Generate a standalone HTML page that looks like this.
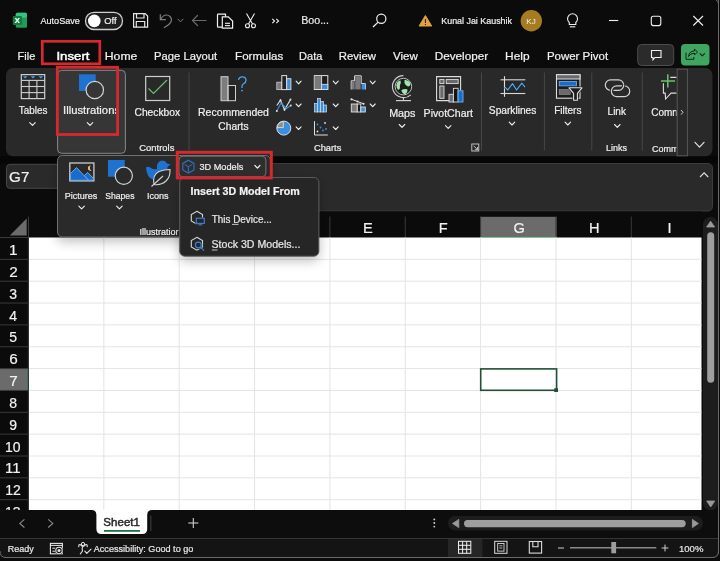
<!DOCTYPE html>
<html><head><meta charset="utf-8"><style>
html,body{margin:0;padding:0;background:#0b0b0b;width:720px;height:561px;overflow:hidden}
svg{display:block;will-change:transform;font-family:"Liberation Sans",sans-serif}
</style></head><body>
<svg width="720" height="561" viewBox="0 0 720 561">
<rect x="0" y="0" width="720" height="561" rx="0" fill="#0b0b0b" />
<path d="M718.5,0 L718.5,551 Q718.5,557.5 712,557.5 L6,557.5 Q0,557.5 0,551" fill="none" stroke="#6a6a6a" stroke-width="1" />
<rect x="15.8" y="12.8" width="11.2" height="15" rx="1.5" fill="#1f9d55" />
<rect x="15.8" y="12.8" width="11.2" height="5" rx="1.5" fill="#33c481" />
<rect x="12.8" y="16" width="9.1" height="9.1" rx="1" fill="#107c41" />
<text x="14.73" y="23.18" font-size="7.50" font-weight="bold" fill="#ffffff"  stroke="#ffffff" stroke-width="0.2">X</text>
<text x="40.48" y="23.80" font-size="9.60" fill="#f0f0f0" textLength="39.42" lengthAdjust="spacingAndGlyphs"  stroke="#f0f0f0" stroke-width="0.2">AutoSave</text>
<rect x="85.5" y="12.3" width="37" height="17.2" rx="8.6" fill="#1e1e1e" stroke="#cfcfcf" stroke-width="1.3" />
<circle cx="94.3" cy="20.9" r="6.3" fill="#ffffff"/>
<text x="104.25" y="24.23" font-size="9.40" fill="#f0f0f0"  stroke="#f0f0f0" stroke-width="0.2">Off</text>
<path d="M133.6,13.6 H145.2 L147.6,16 V27.2 H133.6 Z" fill="none" stroke="#e6e6e6" stroke-width="1.2" />
<path d="M136.5,13.6 V18 H144 V13.6" fill="none" stroke="#e6e6e6" stroke-width="1.2" />
<path d="M136.3,27.2 V21.5 H144.7 V27.2" fill="none" stroke="#e6e6e6" stroke-width="1.2" />
<path d="M160.3,14.5 V19.6 H165.5 M160.6,19.4 Q163,15 166.5,15 A5,5 0 0 1 171.5,20 Q171.5,23.5 164.3,27.5" fill="none" stroke="#7d7d7d" stroke-width="1.2" stroke-linecap="round"/>
<path d="M178.0,19.2 L180.5,21.8 L183.0,19.2" fill="none" stroke="#7d7d7d" stroke-width="1" stroke-linecap="round" stroke-linejoin="round"/>
<path d="M192.5,20.5 H206 M197.5,15.5 L192.5,20.5 L197.5,25.5" fill="none" stroke="#6a6a6a" stroke-width="1.2" stroke-linecap="round" stroke-linejoin="round"/>
<path d="M225.5,16.5 V14.2 H218.2 Q217.5,14.2 217.5,15 V26.5 Q217.5,27.2 218.2,27.2 H222" fill="none" stroke="#f0f0f0" stroke-width="1.2" />
<path d="M222.3,16.8 H228.3 L232.6,21 V28.2 H222.3 Z" fill="none" stroke="#f0f0f0" stroke-width="1.2" />
<line x1="225" y1="23.3" x2="230" y2="23.3" stroke="#f0f0f0" stroke-width="1.1" />
<line x1="225" y1="25.6" x2="230" y2="25.6" stroke="#f0f0f0" stroke-width="1.1" />
<path d="M246.5,13.5 L252.5,24 M254.5,13.5 L248.5,24" fill="none" stroke="#f0f0f0" stroke-width="1.1" />
<circle cx="247.5" cy="25.8" r="2" fill="none" stroke="#f0f0f0" stroke-width="1.1"/>
<circle cx="253.5" cy="25.8" r="2" fill="none" stroke="#f0f0f0" stroke-width="1.1"/>
<path d="M272.3,18.8 L274.6,21 L272.3,23.2 M276.3,18.8 L278.6,21 L276.3,23.2" fill="none" stroke="#f0f0f0" stroke-width="1.1" />
<text x="301.18" y="24.44" font-size="10.00" fill="#e8e8e8" textLength="27.85" lengthAdjust="spacingAndGlyphs"  stroke="#e8e8e8" stroke-width="0.2">Boo...</text>
<circle cx="381.3" cy="18.8" r="4.6" fill="none" stroke="#f0f0f0" stroke-width="1.2"/>
<line x1="377.9" y1="22.4" x2="373" y2="27" stroke="#f0f0f0" stroke-width="1.3" />
<path d="M425.4,15.5 L431.7,26 H419.1 Z" fill="#e2a23e" stroke="#e2a23e" stroke-width="1" stroke-linejoin="round"/>
<rect x="424.9" y="19" width="1.1" height="4" rx="0" fill="#3a2a10" />
<rect x="424.9" y="24" width="1.1" height="1.1" rx="0" fill="#3a2a10" />
<text x="441.26" y="24.10" font-size="9.00" fill="#f0f0f0" textLength="70.72" lengthAdjust="spacingAndGlyphs"  stroke="#f0f0f0" stroke-width="0.2">Kunal Jai Kaushik</text>
<circle cx="531.3" cy="20.7" r="10.7" fill="#a67c20"/>
<text x="526.34" y="23.75" font-size="8.00" fill="#f4f4f4" stroke-width="0">KJ</text>
<path d="M569.3,22.5 A5,5 0 1 1 575.8,22.5 V24.5 H569.3 Z" fill="none" stroke="#f0f0f0" stroke-width="1.1" />
<line x1="569.8" y1="26.8" x2="575.3" y2="26.8" stroke="#f0f0f0" stroke-width="1.1" />
<line x1="609" y1="20.5" x2="618.3" y2="20.5" stroke="#f0f0f0" stroke-width="1.1" />
<rect x="651.3" y="16.3" width="9.5" height="9.3" rx="2" fill="none" stroke="#f0f0f0" stroke-width="1.1" />
<path d="M693.3,16 L703,25.5 M703,16 L693.3,25.5" fill="none" stroke="#f0f0f0" stroke-width="1.1" />
<text x="17.60" y="59.78" font-size="11.00" fill="#f2f2f2"  stroke="#f2f2f2" stroke-width="0.2">File</text>
<text x="56.46" y="59.89" font-size="11.30" fill="#ffffff" textLength="33.01" lengthAdjust="spacingAndGlyphs" stroke="#ffffff" stroke-width="0.45">Insert</text>
<text x="104.80" y="59.78" font-size="11.00" fill="#f2f2f2" textLength="32.54" lengthAdjust="spacingAndGlyphs"  stroke="#f2f2f2" stroke-width="0.2">Home</text>
<text x="154.10" y="59.78" font-size="11.00" fill="#f2f2f2" textLength="63.00" lengthAdjust="spacingAndGlyphs"  stroke="#f2f2f2" stroke-width="0.2">Page Layout</text>
<text x="235.10" y="59.78" font-size="11.00" fill="#f2f2f2" textLength="48.06" lengthAdjust="spacingAndGlyphs"  stroke="#f2f2f2" stroke-width="0.2">Formulas</text>
<text x="299.10" y="59.78" font-size="11.00" fill="#f2f2f2"  stroke="#f2f2f2" stroke-width="0.2">Data</text>
<text x="338.80" y="59.78" font-size="11.00" fill="#f2f2f2" textLength="37.20" lengthAdjust="spacingAndGlyphs"  stroke="#f2f2f2" stroke-width="0.2">Review</text>
<text x="392.95" y="59.78" font-size="11.00" fill="#f2f2f2" textLength="24.82" lengthAdjust="spacingAndGlyphs"  stroke="#f2f2f2" stroke-width="0.2">View</text>
<text x="434.70" y="59.78" font-size="11.00" fill="#f2f2f2" textLength="53.56" lengthAdjust="spacingAndGlyphs"  stroke="#f2f2f2" stroke-width="0.2">Developer</text>
<text x="505.10" y="59.78" font-size="11.00" fill="#f2f2f2" textLength="24.48" lengthAdjust="spacingAndGlyphs"  stroke="#f2f2f2" stroke-width="0.2">Help</text>
<text x="546.90" y="59.78" font-size="11.00" fill="#f2f2f2" textLength="61.23" lengthAdjust="spacingAndGlyphs"  stroke="#f2f2f2" stroke-width="0.2">Power Pivot</text>
<rect x="42.3" y="41.3" width="57.5" height="22.5" rx="0" fill="none" stroke="#d42a2f" stroke-width="2.7" />
<rect x="637.7" y="44.5" width="36" height="21" rx="4" fill="#2b2b2b" stroke="#4d4d4d" stroke-width="1" />
<path d="M651.5,50.5 H661 V57.5 H655 L653,59.8 V57.5 H651.5 Z" fill="none" stroke="#f0f0f0" stroke-width="1.1" />
<rect x="681" y="44" width="28.5" height="21.5" rx="4" fill="#3fa560" />
<path d="M686,52.5 V59.3 H693.8 V57 M688.5,56.5 Q689,51 694.5,51 V49 L697.5,52 L694.5,55 V53.2 Q690.5,53 688.5,56.5 Z" fill="none" stroke="#0f2a18" stroke-width="1" />
<path d="M700.05,53.550000000000004 L702.3,55.85 L704.55,53.550000000000004" fill="none" stroke="#0f2a18" stroke-width="1.1" stroke-linecap="round" stroke-linejoin="round"/>
<rect x="0" y="156" width="718" height="7.5" rx="0" fill="#060606" />
<rect x="6" y="68" width="706.5" height="88.2" rx="7" fill="#292929" />
<line x1="189" y1="72.5" x2="189" y2="150.5" stroke="#474747" stroke-width="1" />
<line x1="481.5" y1="72.5" x2="481.5" y2="150.5" stroke="#474747" stroke-width="1" />
<line x1="544.4" y1="72.5" x2="544.4" y2="150.5" stroke="#474747" stroke-width="1" />
<line x1="591.8" y1="72.5" x2="591.8" y2="150.5" stroke="#474747" stroke-width="1" />
<line x1="642.3" y1="72.5" x2="642.3" y2="150.5" stroke="#474747" stroke-width="1" />
<rect x="21.3" y="74.6" width="23.4" height="24" rx="0" fill="none" stroke="#cfcfcf" stroke-width="1.2" />
<line x1="21.3" y1="80.4" x2="44.7" y2="80.4" stroke="#cfcfcf" stroke-width="1.1" />
<line x1="21.3" y1="86.5" x2="44.7" y2="86.5" stroke="#cfcfcf" stroke-width="1.1" />
<line x1="21.3" y1="92.6" x2="44.7" y2="92.6" stroke="#cfcfcf" stroke-width="1.1" />
<line x1="29.1" y1="80.4" x2="29.1" y2="98.6" stroke="#cfcfcf" stroke-width="1.1" />
<line x1="36.9" y1="80.4" x2="36.9" y2="98.6" stroke="#cfcfcf" stroke-width="1.1" />
<path d="M22.9,76.3 H27.5 L25.2,78.6 Z" fill="#4aa3f0" />
<path d="M30.7,76.3 H35.3 L33,78.6 Z" fill="#4aa3f0" />
<path d="M38.5,76.3 H43.099999999999994 L40.8,78.6 Z" fill="#4aa3f0" />
<text x="18.78" y="113.84" font-size="10.00" fill="#f0f0f0" textLength="28.56" lengthAdjust="spacingAndGlyphs"  stroke="#f0f0f0" stroke-width="0.2">Tables</text>
<path d="M29.75,122.6 L32.5,125.4 L35.25,122.6" fill="none" stroke="#f0f0f0" stroke-width="1.1" stroke-linecap="round" stroke-linejoin="round"/>
<rect x="57.6" y="70.3" width="67.8" height="83" rx="4" fill="#363636" stroke="#8a8a8a" stroke-width="1" />
<rect x="79" y="74.3" width="16.7" height="16.7" rx="0" fill="#1e72d0" />
<circle cx="94.8" cy="90" r="8.7" fill="#363636" stroke="#d4d4d4" stroke-width="1.2"/>
<clipPath id="illc"><rect x="58" y="70" width="58" height="80"/></clipPath>
<text x="63.08" y="114.44" font-size="10.00" fill="#f0f0f0" textLength="56.95" lengthAdjust="spacingAndGlyphs" clip-path="url(#illc)" stroke="#f0f0f0" stroke-width="0.2">Illustrations</text>
<path d="M87.25,122.6 L90,125.4 L92.75,122.6" fill="none" stroke="#f0f0f0" stroke-width="1.1" stroke-linecap="round" stroke-linejoin="round"/>
<rect x="57.3" y="67.3" width="60.3" height="67.2" rx="0" fill="none" stroke="#d42a2f" stroke-width="2.8" />
<rect x="145.7" y="76.5" width="24" height="24" rx="0" fill="none" stroke="#cfcfcf" stroke-width="1.2" />
<path d="M148.5,88.5 L153.5,93.5 L167,80" fill="none" stroke="#6cc070" stroke-width="1.2" />
<text x="134.49" y="115.64" font-size="10.00" fill="#f0f0f0" textLength="45.63" lengthAdjust="spacingAndGlyphs"  stroke="#f0f0f0" stroke-width="0.2">Checkbox</text>
<text x="139.34" y="151.40" font-size="9.00" fill="#f0f0f0" textLength="35.02" lengthAdjust="spacingAndGlyphs"  stroke="#f0f0f0" stroke-width="0.2">Controls</text>
<rect x="221" y="76.7" width="7" height="24" rx="0" fill="#7d7d7d" />
<rect x="228" y="85.5" width="7.5" height="15.2" rx="0" fill="#232323" stroke="#cfcfcf" stroke-width="1" />
<rect x="221" y="76.7" width="7" height="24" rx="0" fill="none" stroke="#cfcfcf" stroke-width="1" />
<path d="M238.6,80 Q238.8,76.8 242.3,76.8 Q246,76.8 246,80.2 Q246,82.6 243.3,84 Q242,84.8 242,86.8 V88" fill="none" stroke="#4aa3f0" stroke-width="1.3" />
<circle cx="242" cy="90.6" r="0.9" fill="#4aa3f0"/>
<text x="198.08" y="116.04" font-size="10.00" fill="#f0f0f0" textLength="70.83" lengthAdjust="spacingAndGlyphs"  stroke="#f0f0f0" stroke-width="0.2">Recommended</text>
<text x="218.39" y="130.44" font-size="10.00" fill="#f0f0f0" textLength="30.19" lengthAdjust="spacingAndGlyphs"  stroke="#f0f0f0" stroke-width="0.2">Charts</text>
<rect x="276.8" y="82.2" width="4.8" height="7.4" rx="0" fill="#7a7a7a" stroke="#cfcfcf" stroke-width="0.8" />
<rect x="281.8" y="75.6" width="4.8" height="14" rx="0" fill="#232323" stroke="#e0e0e0" stroke-width="1" />
<rect x="286.7" y="78.7" width="4.2" height="10.9" rx="0" fill="#3b8fe0" stroke="#e0e0e0" stroke-width="0.9" />
<path d="M296.1,81.2 L298.6,83.8 L301.1,81.2" fill="none" stroke="#f0f0f0" stroke-width="1.1" stroke-linecap="round" stroke-linejoin="round"/>
<path d="M276.8,105.5 L280.5,100.2 L284.5,109.8 L290.5,99.6" fill="none" stroke="#e0e0e0" stroke-width="1.1" />
<path d="M276.8,111 L281,103 L286.5,108.5 L290.8,105.5" fill="none" stroke="#3b8fe0" stroke-width="1.1" />
<circle cx="280.5" cy="100.2" r="1" fill="#e0e0e0"/>
<circle cx="284.5" cy="109.8" r="1" fill="#e0e0e0"/>
<circle cx="290.5" cy="99.6" r="1" fill="#e0e0e0"/>
<circle cx="276.8" cy="111" r="1" fill="#e0e0e0"/>
<circle cx="290.8" cy="105.5" r="1" fill="#e0e0e0"/>
<path d="M296.1,104.0 L298.6,106.6 L301.1,104.0" fill="none" stroke="#f0f0f0" stroke-width="1.1" stroke-linecap="round" stroke-linejoin="round"/>
<circle cx="283.8" cy="128.1" r="7" fill="#3b8fe0" stroke="#e0e0e0" stroke-width="1"/>
<path d="M283.3,127.6 V121.6 A6,6 0 0 0 277.3,127.6 Z" fill="#8c8c8c" stroke="#e0e0e0" stroke-width="0.9" />
<path d="M296.1,126.89999999999999 L298.6,129.5 L301.1,126.89999999999999" fill="none" stroke="#f0f0f0" stroke-width="1.1" stroke-linecap="round" stroke-linejoin="round"/>
<rect x="314.3" y="75.6" width="13.5" height="13.9" rx="0" fill="#1c1c1c" stroke="#e0e0e0" stroke-width="1" />
<rect x="314.8" y="76.1" width="6.8" height="12.9" rx="0" fill="#7a7a7a" />
<line x1="321.6" y1="75.6" x2="321.6" y2="89.5" stroke="#e0e0e0" stroke-width="0.9" />
<rect x="321.6" y="84.3" width="6.2" height="5.2" rx="0" fill="#3b8fe0" stroke="#e0e0e0" stroke-width="0.8" />
<path d="M333.2,81.2 L335.7,83.8 L338.2,81.2" fill="none" stroke="#f0f0f0" stroke-width="1.1" stroke-linecap="round" stroke-linejoin="round"/>
<rect x="314.5" y="103.6" width="3" height="8.400000000000006" rx="0" fill="#3b8fe0" stroke="#e0e0e0" stroke-width="0.7" />
<rect x="317.5" y="98.5" width="3" height="13.5" rx="0" fill="#3b8fe0" stroke="#e0e0e0" stroke-width="0.7" />
<rect x="320.5" y="101.5" width="3" height="10.5" rx="0" fill="#3b8fe0" stroke="#e0e0e0" stroke-width="0.7" />
<rect x="323.5" y="105" width="3" height="7" rx="0" fill="#3b8fe0" stroke="#e0e0e0" stroke-width="0.7" />
<path d="M333.2,104.0 L335.7,106.6 L338.2,104.0" fill="none" stroke="#f0f0f0" stroke-width="1.1" stroke-linecap="round" stroke-linejoin="round"/>
<path d="M314.5,121.2 V135 H327.8" fill="none" stroke="#e0e0e0" stroke-width="1" />
<circle cx="317.5" cy="124.5" r="0.9" fill="#3b8fe0"/>
<circle cx="320.5" cy="127.5" r="0.9" fill="#3b8fe0"/>
<circle cx="323" cy="130.5" r="0.9" fill="#3b8fe0"/>
<circle cx="325" cy="123" r="0.9" fill="#e0e0e0"/>
<circle cx="317.5" cy="131.5" r="0.9" fill="#e0e0e0"/>
<circle cx="326" cy="129" r="0.9" fill="#3b8fe0"/>
<path d="M333.2,126.89999999999999 L335.7,129.5 L338.2,126.89999999999999" fill="none" stroke="#f0f0f0" stroke-width="1.1" stroke-linecap="round" stroke-linejoin="round"/>
<path d="M351.2,89.5 V80.8 H354.6 V75.8 H361.2 V83.5 H365.3 V89.5" fill="none" stroke="#e0e0e0" stroke-width="1" />
<rect x="355.2" y="76.4" width="5.4" height="13" rx="0" fill="#7a7a7a" />
<rect x="351.8" y="81.4" width="2.8" height="8" rx="0" fill="#7a7a7a" />
<rect x="361.6" y="83.8" width="3.4" height="5.7" rx="0" fill="#3b8fe0" />
<path d="M370.2,81.2 L372.7,83.8 L375.2,81.2" fill="none" stroke="#f0f0f0" stroke-width="1.1" stroke-linecap="round" stroke-linejoin="round"/>
<path d="M351.5,99.3 L357.5,101.5 L363.5,103.8" fill="none" stroke="#e0e0e0" stroke-width="1" />
<circle cx="351.5" cy="99.3" r="1.1" fill="#e0e0e0"/>
<circle cx="357.5" cy="101.5" r="1.1" fill="#e0e0e0"/>
<circle cx="363.5" cy="103.8" r="1.1" fill="#e0e0e0"/>
<rect x="351.3" y="104" width="6" height="8" rx="0" fill="#7a7a7a" stroke="#e0e0e0" stroke-width="0.9" />
<rect x="357.3" y="104" width="3.5" height="8" rx="0" fill="#1c1c1c" stroke="#e0e0e0" stroke-width="0.9" />
<rect x="360.8" y="107" width="4.5" height="5" rx="0" fill="#3b8fe0" stroke="#e0e0e0" stroke-width="0.9" />
<path d="M370.2,104.0 L372.7,106.6 L375.2,104.0" fill="none" stroke="#f0f0f0" stroke-width="1.1" stroke-linecap="round" stroke-linejoin="round"/>
<text x="313.94" y="150.60" font-size="9.00" fill="#f0f0f0" textLength="27.41" lengthAdjust="spacingAndGlyphs"  stroke="#f0f0f0" stroke-width="0.2">Charts</text>
<circle cx="403.4" cy="86.6" r="8.3" fill="#17201a" stroke="#cfcfcf" stroke-width="0.9"/>
<path d="M396.5,84 Q398,80.5 400.5,80.5 Q401.5,83 399.8,85.5 Q400.5,89 398.5,90 Q396,88 396.5,84 Z M404.5,80 Q408,79.5 410.5,83 Q410.5,86.5 408,86.5 Q405.5,86 404.5,83 Z M401.5,90 Q405,88.5 407.5,89.5 Q407.5,93.5 404.5,94.3 Q401.5,93 401.5,90 Z" fill="#a8e2ae" />
<path d="M403.4,75.6 A11,11 0 1 0 410.8,94.8" fill="none" stroke="#cfcfcf" stroke-width="1.1" />
<line x1="403.4" y1="97.6" x2="403.4" y2="100.3" stroke="#cfcfcf" stroke-width="1.1" />
<line x1="396" y1="100.6" x2="411" y2="100.6" stroke="#cfcfcf" stroke-width="1.2" />
<text x="389.18" y="116.74" font-size="10.00" fill="#f0f0f0" textLength="26.27" lengthAdjust="spacingAndGlyphs"  stroke="#f0f0f0" stroke-width="0.2">Maps</text>
<path d="M399.25,124.5 L402,127.30000000000001 L404.75,124.5" fill="none" stroke="#f0f0f0" stroke-width="1.1" stroke-linecap="round" stroke-linejoin="round"/>
<path d="M449,100.6 H436.6 V76.6 H460.6 V90.5" fill="none" stroke="#dedede" stroke-width="1.1" />
<rect x="439.8" y="79.4" width="4.2" height="4.2" rx="0" fill="#6a6a6a" stroke="#dedede" stroke-width="0.9" />
<rect x="446.2" y="79.4" width="12" height="4.2" rx="0" fill="#6a6a6a" stroke="#dedede" stroke-width="0.9" />
<rect x="439.8" y="86" width="4.2" height="12.3" rx="0" fill="#6a6a6a" stroke="#dedede" stroke-width="0.9" />
<rect x="449" y="94.3" width="4.4" height="7.7" rx="0" fill="#6a6a6a" stroke="#dedede" stroke-width="0.9" />
<rect x="453.4" y="88.3" width="4.7" height="13.7" rx="0" fill="#151515" stroke="#dedede" stroke-width="0.9" />
<rect x="458.1" y="90.8" width="4.9" height="11.2" rx="0" fill="#1a6ccc" stroke="#74b2ee" stroke-width="0.9" />
<text x="423.58" y="117.04" font-size="10.00" fill="#f0f0f0" textLength="49.45" lengthAdjust="spacingAndGlyphs"  stroke="#f0f0f0" stroke-width="0.2">PivotChart</text>
<path d="M445.45,125.6 L448.2,128.4 L450.95,125.6" fill="none" stroke="#f0f0f0" stroke-width="1.1" stroke-linecap="round" stroke-linejoin="round"/>
<rect x="471.8" y="144" width="7" height="7" rx="0" fill="none" stroke="#cfcfcf" stroke-width="0.9" />
<path d="M473.5,145.7 L477.5,149.7 M477.5,147 V149.7 H474.8" fill="none" stroke="#cfcfcf" stroke-width="0.9" />
<line x1="500.5" y1="79.8" x2="525.3" y2="79.8" stroke="#d8d8d8" stroke-width="1.1" />
<line x1="500.5" y1="93.5" x2="525.3" y2="93.5" stroke="#d8d8d8" stroke-width="1.1" />
<line x1="504.5" y1="76.2" x2="504.5" y2="96.8" stroke="#e0e0e0" stroke-width="1.1" />
<path d="M505,87.2 L507.8,90 L512.5,83.6 L516.6,90 L521.8,83.2 L525,87.2" fill="none" stroke="#0d2a44" stroke-width="2.4" stroke-linejoin="round"/>
<path d="M505,87.2 L507.8,90 L512.5,83.6 L516.6,90 L521.8,83.2 L525,87.2" fill="none" stroke="#62aee8" stroke-width="1.1" stroke-linejoin="round"/>
<text x="488.85" y="113.84" font-size="10.00" fill="#f0f0f0" textLength="47.53" lengthAdjust="spacingAndGlyphs"  stroke="#f0f0f0" stroke-width="0.2">Sparklines</text>
<path d="M509.25,122.19999999999999 L512,125.0 L514.75,122.19999999999999" fill="none" stroke="#f0f0f0" stroke-width="1.1" stroke-linecap="round" stroke-linejoin="round"/>
<rect x="556.5" y="74.7" width="23.5" height="23.5" rx="0" fill="#1c1c1c" stroke="#dedede" stroke-width="1.1" />
<rect x="556.5" y="74.7" width="23.5" height="4.3" rx="0" fill="#6a6a6a" stroke="#dedede" stroke-width="1" />
<rect x="559.2" y="81.4" width="17.3" height="4.5" rx="0" fill="#1a6ccc" stroke="#74b2ee" stroke-width="0.8" />
<rect x="559.2" y="89.6" width="11" height="4.8" rx="0" fill="#6a6a6a" stroke="#9a9a9a" stroke-width="0.6" />
<path d="M569,87.8 H582 L577.4,93.4 V100.2 H573.6 V93.4 Z" fill="#292929" stroke="#292929" stroke-width="2.4" />
<path d="M569,87.8 H582 L577.4,93.4 V100.2 H573.6 V93.4 Z" fill="#1c1c1c" stroke="#dedede" stroke-width="1.1" stroke-linejoin="round"/>
<text x="554.18" y="113.84" font-size="10.00" fill="#f0f0f0"  stroke="#f0f0f0" stroke-width="0.2">Filters</text>
<path d="M565.05,122.19999999999999 L567.8,125.0 L570.55,122.19999999999999" fill="none" stroke="#f0f0f0" stroke-width="1.1" stroke-linecap="round" stroke-linejoin="round"/>
<path d="M610.55,79.8 H618.45 A5.25,5.25 0 0 1 618.45,90.3 H610.55 A5.25,5.25 0 0 1 610.55,79.8 Z" fill="none" stroke="#d4d4d4" stroke-width="1.2" />
<path d="M616.8,96.7 A5.45,5.45 0 0 1 616.8,85.8 H622" fill="none" stroke="#292929" stroke-width="3.2" />
<path d="M616.8,85.8 H624.3 A5.45,5.45 0 0 1 624.3,96.7 H616.8 A5.45,5.45 0 0 1 616.8,85.8 Z" fill="none" stroke="#d4d4d4" stroke-width="1.2" />
<path d="M623.7,84.5 A5.25,5.25 0 0 1 618.45,90.3 H613" fill="none" stroke="#292929" stroke-width="3.2" />
<path d="M623.7,84.5 A5.25,5.25 0 0 1 618.45,90.3 H613.5" fill="none" stroke="#d4d4d4" stroke-width="1.2" />
<text x="607.58" y="115.34" font-size="10.00" fill="#f0f0f0"  stroke="#f0f0f0" stroke-width="0.2">Link</text>
<path d="M614.55,124.5 L617.3,127.30000000000001 L620.05,124.5" fill="none" stroke="#f0f0f0" stroke-width="1.1" stroke-linecap="round" stroke-linejoin="round"/>
<text x="605.96" y="150.60" font-size="9.00" fill="#f0f0f0"  stroke="#f0f0f0" stroke-width="0.2">Links</text>
<clipPath id="comc"><rect x="640" y="68" width="36.5" height="90"/></clipPath>
<g clip-path="url(#comc)">
<path d="M663.4,83.2 V93.1 H665.2 L665.6,99 L671,93.1 H680 V77.4 H670.3" fill="none" stroke="#dcdcdc" stroke-width="1.1" />
<line x1="661" y1="80.9" x2="675" y2="80.9" stroke="#6cc06f" stroke-width="1.5" />
<line x1="667.8" y1="74.3" x2="667.8" y2="87.6" stroke="#6cc06f" stroke-width="1.5" />
<text x="651.19" y="116.34" font-size="10.00" fill="#f0f0f0"  stroke="#f0f0f0" stroke-width="0.2">Comments</text>
<text x="651.94" y="151.60" font-size="9.00" fill="#f0f0f0"  stroke="#f0f0f0" stroke-width="0.2">Comments</text>
</g>
<rect x="677.2" y="69.2" width="10.2" height="86.6" rx="0" fill="#292929" stroke="#585858" stroke-width="1" />
<path d="M681,110 L683,112.3 L681,114.6" fill="none" stroke="#cfcfcf" stroke-width="1" />
<path d="M695.0,142.29999999999998 L699.5,147.1 L704.0,142.29999999999998" fill="none" stroke="#e0e0e0" stroke-width="1.2" stroke-linecap="round" stroke-linejoin="round"/>
<rect x="160.5" y="163.5" width="552" height="47.5" rx="4.5" fill="#2a2a2a" stroke="#3c3c3c" stroke-width="1" />
<rect x="6.5" y="164.3" width="110" height="24" rx="3.5" fill="#2a2a2a" stroke="#484848" stroke-width="1" />
<text x="9.10" y="181.52" font-size="14.00" fill="#f0f0f0" textLength="20.23" lengthAdjust="spacingAndGlyphs"  stroke="#f0f0f0" stroke-width="0.2">G7</text>
<path d="M700,177 L704.1,172.8 L708.2,177" fill="none" stroke="#e0e0e0" stroke-width="1.1" />
<rect x="0" y="211.5" width="702" height="26" rx="0" fill="#0b0b0b" />
<rect x="480" y="216.8" width="76.6" height="20.7" rx="0" fill="#6b6b6b" />
<line x1="480" y1="236.8" x2="556.6" y2="236.8" stroke="#3e8a5e" stroke-width="1.2" />
<line x1="103.85" y1="216.5" x2="103.85" y2="237.5" stroke="#3a3a3a" stroke-width="1" />
<line x1="179.2" y1="216.5" x2="179.2" y2="237.5" stroke="#3a3a3a" stroke-width="1" />
<line x1="254.54999999999998" y1="216.5" x2="254.54999999999998" y2="237.5" stroke="#3a3a3a" stroke-width="1" />
<line x1="329.9" y1="216.5" x2="329.9" y2="237.5" stroke="#3a3a3a" stroke-width="1" />
<line x1="405.25" y1="216.5" x2="405.25" y2="237.5" stroke="#3a3a3a" stroke-width="1" />
<line x1="480.59999999999997" y1="216.5" x2="480.59999999999997" y2="237.5" stroke="#3a3a3a" stroke-width="1" />
<line x1="555.9499999999999" y1="216.5" x2="555.9499999999999" y2="237.5" stroke="#3a3a3a" stroke-width="1" />
<line x1="631.3" y1="216.5" x2="631.3" y2="237.5" stroke="#3a3a3a" stroke-width="1" />
<line x1="28.5" y1="216.5" x2="28.5" y2="237.5" stroke="#3a3a3a" stroke-width="1" />
<text x="62.00" y="232.62" font-size="14.60" fill="#f2f2f2"  stroke="#f2f2f2" stroke-width="0.2">A</text>
<text x="137.10" y="232.62" font-size="14.60" fill="#f2f2f2"  stroke="#f2f2f2" stroke-width="0.2">B</text>
<text x="212.20" y="232.62" font-size="14.60" fill="#f2f2f2"  stroke="#f2f2f2" stroke-width="0.2">C</text>
<text x="287.38" y="232.62" font-size="14.60" fill="#f2f2f2"  stroke="#f2f2f2" stroke-width="0.2">D</text>
<text x="363.08" y="232.62" font-size="14.60" fill="#f2f2f2"  stroke="#f2f2f2" stroke-width="0.2">E</text>
<text x="438.81" y="232.62" font-size="14.60" fill="#f2f2f2"  stroke="#f2f2f2" stroke-width="0.2">F</text>
<text x="513.47" y="232.62" font-size="14.60" fill="#f2f2f2"  stroke="#f2f2f2" stroke-width="0.2">G</text>
<text x="589.02" y="232.62" font-size="14.60" fill="#f2f2f2"  stroke="#f2f2f2" stroke-width="0.2">H</text>
<text x="667.47" y="232.62" font-size="14.60" fill="#f2f2f2"  stroke="#f2f2f2" stroke-width="0.2">I</text>
<path d="M26.7,218.6 V235.6 H9.8 Z" fill="#6b6b6b" />
<rect x="28.5" y="237.5" width="673" height="272.5" rx="0" fill="#ffffff" />
<line x1="28.5" y1="259.35" x2="701.5" y2="259.35" stroke="#e4e4e4" stroke-width="1" />
<line x1="28.5" y1="281.2" x2="701.5" y2="281.2" stroke="#e4e4e4" stroke-width="1" />
<line x1="28.5" y1="303.05" x2="701.5" y2="303.05" stroke="#e4e4e4" stroke-width="1" />
<line x1="28.5" y1="324.9" x2="701.5" y2="324.9" stroke="#e4e4e4" stroke-width="1" />
<line x1="28.5" y1="346.75" x2="701.5" y2="346.75" stroke="#e4e4e4" stroke-width="1" />
<line x1="28.5" y1="368.6" x2="701.5" y2="368.6" stroke="#e4e4e4" stroke-width="1" />
<line x1="28.5" y1="390.45000000000005" x2="701.5" y2="390.45000000000005" stroke="#e4e4e4" stroke-width="1" />
<line x1="28.5" y1="412.3" x2="701.5" y2="412.3" stroke="#e4e4e4" stroke-width="1" />
<line x1="28.5" y1="434.15" x2="701.5" y2="434.15" stroke="#e4e4e4" stroke-width="1" />
<line x1="28.5" y1="456.0" x2="701.5" y2="456.0" stroke="#e4e4e4" stroke-width="1" />
<line x1="28.5" y1="477.85" x2="701.5" y2="477.85" stroke="#e4e4e4" stroke-width="1" />
<line x1="28.5" y1="499.70000000000005" x2="701.5" y2="499.70000000000005" stroke="#e4e4e4" stroke-width="1" />
<line x1="103.85" y1="237.5" x2="103.85" y2="510" stroke="#e4e4e4" stroke-width="1" />
<line x1="179.2" y1="237.5" x2="179.2" y2="510" stroke="#e4e4e4" stroke-width="1" />
<line x1="254.54999999999998" y1="237.5" x2="254.54999999999998" y2="510" stroke="#e4e4e4" stroke-width="1" />
<line x1="329.9" y1="237.5" x2="329.9" y2="510" stroke="#e4e4e4" stroke-width="1" />
<line x1="405.25" y1="237.5" x2="405.25" y2="510" stroke="#e4e4e4" stroke-width="1" />
<line x1="480.59999999999997" y1="237.5" x2="480.59999999999997" y2="510" stroke="#e4e4e4" stroke-width="1" />
<line x1="555.9499999999999" y1="237.5" x2="555.9499999999999" y2="510" stroke="#e4e4e4" stroke-width="1" />
<line x1="631.3" y1="237.5" x2="631.3" y2="510" stroke="#e4e4e4" stroke-width="1" />
<rect x="0" y="237.5" width="28.5" height="272.5" rx="0" fill="#0b0b0b" />
<rect x="0" y="368.6" width="28.5" height="21.85" rx="0" fill="#6b6b6b" />
<line x1="27.9" y1="368.6" x2="27.9" y2="390.45000000000005" stroke="#3e8a5e" stroke-width="1.2" />
<line x1="0" y1="237.5" x2="28.5" y2="237.5" stroke="#3a3a3a" stroke-width="1" />
<text x="9.02" y="254.99" font-size="15.30" fill="#f2f2f2"  stroke="#f2f2f2" stroke-width="0.2">1</text>
<line x1="0" y1="259.35" x2="28.5" y2="259.35" stroke="#3a3a3a" stroke-width="1" />
<text x="9.24" y="276.84" font-size="15.30" fill="#f2f2f2"  stroke="#f2f2f2" stroke-width="0.2">2</text>
<line x1="0" y1="281.2" x2="28.5" y2="281.2" stroke="#3a3a3a" stroke-width="1" />
<text x="9.30" y="298.69" font-size="15.30" fill="#f2f2f2" textLength="7.79" lengthAdjust="spacingAndGlyphs"  stroke="#f2f2f2" stroke-width="0.2">3</text>
<line x1="0" y1="303.05" x2="28.5" y2="303.05" stroke="#3a3a3a" stroke-width="1" />
<text x="9.32" y="320.54" font-size="15.30" fill="#f2f2f2" textLength="7.79" lengthAdjust="spacingAndGlyphs"  stroke="#f2f2f2" stroke-width="0.2">4</text>
<line x1="0" y1="324.9" x2="28.5" y2="324.9" stroke="#3a3a3a" stroke-width="1" />
<text x="9.27" y="342.39" font-size="15.30" fill="#f2f2f2" textLength="7.79" lengthAdjust="spacingAndGlyphs"  stroke="#f2f2f2" stroke-width="0.2">5</text>
<line x1="0" y1="346.75" x2="28.5" y2="346.75" stroke="#3a3a3a" stroke-width="1" />
<text x="9.19" y="364.24" font-size="15.30" fill="#f2f2f2"  stroke="#f2f2f2" stroke-width="0.2">6</text>
<line x1="0" y1="368.6" x2="28.5" y2="368.6" stroke="#3a3a3a" stroke-width="1" />
<text x="9.23" y="386.09" font-size="15.30" fill="#f2f2f2"  stroke="#f2f2f2" stroke-width="0.2">7</text>
<line x1="0" y1="390.45000000000005" x2="28.5" y2="390.45000000000005" stroke="#3a3a3a" stroke-width="1" />
<text x="9.25" y="407.94" font-size="15.30" fill="#f2f2f2" textLength="7.79" lengthAdjust="spacingAndGlyphs"  stroke="#f2f2f2" stroke-width="0.2">8</text>
<line x1="0" y1="412.3" x2="28.5" y2="412.3" stroke="#3a3a3a" stroke-width="1" />
<text x="9.25" y="429.79" font-size="15.30" fill="#f2f2f2" textLength="7.79" lengthAdjust="spacingAndGlyphs"  stroke="#f2f2f2" stroke-width="0.2">9</text>
<line x1="0" y1="434.15" x2="28.5" y2="434.15" stroke="#3a3a3a" stroke-width="1" />
<text x="5.06" y="451.64" font-size="15.30" fill="#f2f2f2" textLength="15.57" lengthAdjust="spacingAndGlyphs"  stroke="#f2f2f2" stroke-width="0.2">10</text>
<line x1="0" y1="456.0" x2="28.5" y2="456.0" stroke="#3a3a3a" stroke-width="1" />
<text x="5.12" y="473.49" font-size="15.30" fill="#f2f2f2" textLength="15.57" lengthAdjust="spacingAndGlyphs"  stroke="#f2f2f2" stroke-width="0.2">11</text>
<line x1="0" y1="477.85" x2="28.5" y2="477.85" stroke="#3a3a3a" stroke-width="1" />
<text x="5.13" y="495.34" font-size="15.30" fill="#f2f2f2" textLength="15.57" lengthAdjust="spacingAndGlyphs"  stroke="#f2f2f2" stroke-width="0.2">12</text>
<line x1="0" y1="499.70000000000005" x2="28.5" y2="499.70000000000005" stroke="#3a3a3a" stroke-width="1" />
<text x="5.09" y="517.19" font-size="15.30" fill="#f2f2f2" textLength="15.57" lengthAdjust="spacingAndGlyphs"  stroke="#f2f2f2" stroke-width="0.2">13</text>
<line x1="28.3" y1="237.5" x2="28.3" y2="510" stroke="#2f2f2f" stroke-width="1" />
<rect x="480.7" y="368.9" width="75.9" height="21.4" rx="0" fill="none" stroke="#1f5136" stroke-width="1.6" />
<rect x="554.2" y="388.3" width="3.8" height="3.7" rx="0" fill="#1f5136" />
<rect x="702.5" y="212" width="16" height="300" rx="0" fill="#0b0b0b" />
<rect x="703" y="217" width="15" height="293.5" rx="7.5" fill="#1d1d1d" />
<path d="M710.6,221.2 L714.6,227 H706.6 Z" fill="#9a9a9a" stroke="#9a9a9a" stroke-width="0.8" stroke-linejoin="round"/>
<rect x="707.2" y="232.2" width="7" height="150.6" rx="3.5" fill="#9e9e9e" />
<path d="M706.7,501 H714.7 L710.7,507 Z" fill="#9a9a9a" stroke="#9a9a9a" stroke-width="0.8" stroke-linejoin="round"/>
<rect x="0" y="510" width="718" height="28" rx="0" fill="#0d0d0d" />
<path d="M91.4,510 Q96.4,510 96.4,515 V529 Q96.4,534 101.4,534 H142.2 Q147.2,534 147.2,529 V515 Q147.2,510 152.2,510 Z" fill="#ffffff" />
<text x="103.39" y="525.55" font-size="11.20" fill="#262626" textLength="36.59" lengthAdjust="spacingAndGlyphs" stroke="#262626" stroke-width="0.45">Sheet1</text>
<rect x="104" y="530" width="36" height="1.8" rx="0" fill="#217346" />
<line x1="150.8" y1="515.6" x2="150.8" y2="531" stroke="#3a3a3a" stroke-width="1.2" />
<path d="M24.4,519.4 L19.8,523.4 L24.4,527.5" fill="none" stroke="#8a8a8a" stroke-width="1.1" />
<path d="M48.2,519.4 L52.8,523.4 L48.2,527.5" fill="none" stroke="#8a8a8a" stroke-width="1.1" />
<line x1="188.3" y1="523" x2="198.3" y2="523" stroke="#d0d0d0" stroke-width="1.1" />
<line x1="193.3" y1="518" x2="193.3" y2="528" stroke="#d0d0d0" stroke-width="1.1" />
<circle cx="434.3" cy="519.4" r="0.95" fill="#d0d0d0"/>
<circle cx="434.3" cy="523" r="0.95" fill="#d0d0d0"/>
<circle cx="434.3" cy="526.6" r="0.95" fill="#d0d0d0"/>
<rect x="448" y="516" width="255" height="14.5" rx="7.25" fill="#1d1d1d" />
<rect x="464" y="520" width="221.7" height="7.2" rx="3.6" fill="#9e9e9e" />
<path d="M458.8,519.4 V527.6 L452.5,523.5 Z" fill="#9a9a9a" stroke="#9a9a9a" stroke-width="0.8" stroke-linejoin="round"/>
<path d="M692.4,519.4 V527.6 L698.4,523.5 Z" fill="#9a9a9a" stroke="#9a9a9a" stroke-width="0.8" stroke-linejoin="round"/>
<rect x="0" y="538.5" width="718" height="19" rx="0" fill="#141414" />
<line x1="0" y1="538.5" x2="718" y2="538.5" stroke="#353535" stroke-width="1" />
<text x="7.76" y="551.70" font-size="9.00" fill="#e8e8e8"  stroke="#e8e8e8" stroke-width="0.2">Ready</text>
<rect x="50.4" y="543.4" width="12" height="10.4" rx="0" fill="none" stroke="#e6e6e6" stroke-width="1.1" />
<line x1="50.4" y1="545.4" x2="62.4" y2="545.4" stroke="#e6e6e6" stroke-width="1" />
<line x1="52.4" y1="548.2" x2="55.2" y2="548.2" stroke="#e6e6e6" stroke-width="1" />
<line x1="52.4" y1="551.2" x2="55.2" y2="551.2" stroke="#e6e6e6" stroke-width="1" />
<circle cx="59" cy="550.5" r="4.1" fill="#141414"/>
<circle cx="59" cy="550.5" r="3.2" fill="none" stroke="#e6e6e6" stroke-width="1.1"/>
<circle cx="59" cy="550.5" r="1.5" fill="#e6e6e6"/>
<circle cx="83" cy="544" r="1.6" fill="none" stroke="#e6e6e6" stroke-width="1"/>
<path d="M78.8,546.6 Q78.6,544.2 80.2,544.6 L82,546.2 H84 L85.8,544.6 Q87.4,544.2 87.2,546.6" fill="none" stroke="#e6e6e6" stroke-width="1.1" stroke-linecap="round" stroke-linejoin="round"/>
<path d="M82.5,546.5 Q81.8,549.5 82.5,551 L80.3,553.8" fill="none" stroke="#e6e6e6" stroke-width="1.1" stroke-linecap="round"/>
<path d="M84.8,551.2 L86.8,553.4 L91,549.2" fill="none" stroke="#e6e6e6" stroke-width="1.1" stroke-linecap="round" stroke-linejoin="round"/>
<text x="93.73" y="551.86" font-size="9.20" fill="#e8e8e8" textLength="99.65" lengthAdjust="spacingAndGlyphs"  stroke="#e8e8e8" stroke-width="0.2">Accessibility: Good to go</text>
<rect x="448" y="539" width="34.4" height="18" rx="0" fill="#262626" />
<rect x="458.5" y="541.3" width="12.3" height="12" rx="0" fill="none" stroke="#f0f0f0" stroke-width="1" />
<line x1="462.6" y1="541.3" x2="462.6" y2="553.3" stroke="#f0f0f0" stroke-width="1" />
<line x1="458.5" y1="545.3" x2="470.8" y2="545.3" stroke="#f0f0f0" stroke-width="1" />
<line x1="466.7" y1="541.3" x2="466.7" y2="553.3" stroke="#f0f0f0" stroke-width="1" />
<line x1="458.5" y1="549.3" x2="470.8" y2="549.3" stroke="#f0f0f0" stroke-width="1" />
<rect x="494.7" y="541.3" width="12.3" height="12" rx="0" fill="none" stroke="#dcdcdc" stroke-width="1" />
<rect x="497.7" y="543.5" width="6.3" height="7.6" rx="0" fill="none" stroke="#dcdcdc" stroke-width="0.9" />
<line x1="499.3" y1="545.8" x2="502.4" y2="545.8" stroke="#dcdcdc" stroke-width="0.8" />
<line x1="499.3" y1="548" x2="502.4" y2="548" stroke="#dcdcdc" stroke-width="0.8" />
<rect x="529.3" y="541.5" width="12.3" height="11.6" rx="0" fill="none" stroke="#dcdcdc" stroke-width="1.1" />
<path d="M532.8,541.5 V546.8 H538 V541.5" fill="none" stroke="#dcdcdc" stroke-width="1.1" />
<line x1="558" y1="548" x2="564" y2="548" stroke="#cfcfcf" stroke-width="1" />
<line x1="570" y1="547.8" x2="656.3" y2="547.8" stroke="#8a8a8a" stroke-width="1.6" />
<rect x="611.3" y="542" width="4.8" height="11.3" rx="0" fill="#9e9e9e" />
<line x1="661.6" y1="548" x2="668.4" y2="548" stroke="#cfcfcf" stroke-width="1" />
<line x1="665" y1="544.6" x2="665" y2="551.4" stroke="#cfcfcf" stroke-width="1" />
<text x="679.00" y="551.86" font-size="9.20" fill="#e8e8e8" textLength="24.37" lengthAdjust="spacingAndGlyphs"  stroke="#e8e8e8" stroke-width="0.2">100%</text>
<defs><filter id="sh" x="-30%" y="-30%" width="160%" height="170%"><feGaussianBlur in="SourceAlpha" stdDeviation="6"/><feOffset dy="4"/><feComponentTransfer><feFuncA type="linear" slope="0.26"/></feComponentTransfer><feMerge><feMergeNode/><feMergeNode in="SourceGraphic"/></feMerge></filter></defs>
<rect x="57.5" y="155.5" width="213" height="81.5" rx="5" fill="#2a2a2a" stroke="#707070" stroke-width="1" filter="url(#sh)"/>
<rect x="69.8" y="163" width="24.1" height="17.9" rx="0" fill="none" stroke="#cdcdcd" stroke-width="1.3" />
<path d="M84.2,175.8 L87.6,172.4 L93.3,178.3 V180.3 H88.5 Z" fill="#1a6ccc" stroke="#74b2ee" stroke-width="0.9" />
<path d="M70.4,173.6 L76.5,167.6 L88.6,180.3 H70.4 Z" fill="#1a6ccc" stroke="#74b2ee" stroke-width="0.9" />
<path d="M90.8,165.4 A2.7,2.7 0 1 0 91.6,170.6 A3.2,3.2 0 0 1 90.8,165.4 Z" fill="#eec07a" />
<text x="64.81" y="198.60" font-size="9.60" fill="#f0f0f0" textLength="32.57" lengthAdjust="spacingAndGlyphs"  stroke="#f0f0f0" stroke-width="0.2">Pictures</text>
<path d="M78.85,206.1 L81.6,208.9 L84.35,206.1" fill="none" stroke="#f0f0f0" stroke-width="1.1" stroke-linecap="round" stroke-linejoin="round"/>
<rect x="108" y="160" width="16.7" height="16.7" rx="0" fill="#1e72d0" />
<circle cx="123.8" cy="175.8" r="8.6" fill="#2a2a2a" stroke="#d4d4d4" stroke-width="1.2"/>
<text x="105.26" y="198.60" font-size="9.60" fill="#f0f0f0" textLength="29.20" lengthAdjust="spacingAndGlyphs"  stroke="#f0f0f0" stroke-width="0.2">Shapes</text>
<path d="M116.65,206.1 L119.4,208.9 L122.15,206.1" fill="none" stroke="#f0f0f0" stroke-width="1.1" stroke-linecap="round" stroke-linejoin="round"/>
<path d="M146,167.5 Q148,166 151,168 Q153.5,170 157,169 Q156,163.5 160,161 Q165,159.5 167,163.5 L170.5,164.5 L167.5,167 Q168,172 164,175 Q160,180.5 153,179.5 Q147,178.5 146,167.5 Z" fill="#1e72d0" />
<path d="M154,184.5 Q152,175 159,171.5 Q164,169.5 170,169.5 Q170.5,177 166,181 Q161,185.5 154,184.5 Z" fill="#2a2a2a" stroke="#d4d4d4" stroke-width="1.1" />
<line x1="151.5" y1="186.5" x2="163" y2="176" stroke="#d4d4d4" stroke-width="1.1" />
<text x="147.01" y="198.60" font-size="9.60" fill="#f0f0f0" textLength="21.66" lengthAdjust="spacingAndGlyphs"  stroke="#f0f0f0" stroke-width="0.2">Icons</text>
<clipPath id="ilc2"><rect x="100" y="220" width="78.5" height="20"/></clipPath>
<text x="139.57" y="234.70" font-size="9.00" fill="#f0f0f0" clip-path="url(#ilc2)" stroke="#f0f0f0" stroke-width="0.2">Illustrations</text>
<rect x="178.9" y="156.2" width="87" height="20.6" rx="4" fill="#2e2e2e" stroke="#777777" stroke-width="1" />
<path d="M188.4,160.2 L194,163.4 V170 L188.4,173.1 L182.8,170 V163.4 Z" fill="none" stroke="#2f72c4" stroke-width="1.1" />
<path d="M184.6,164.5 L188.4,166.7 L192.3,164.5 M188.4,166.7 V172.6" fill="none" stroke="#2f72c4" stroke-width="1" />
<text x="199.44" y="170.47" font-size="9.50" fill="#f0f0f0" textLength="43.88" lengthAdjust="spacingAndGlyphs"  stroke="#f0f0f0" stroke-width="0.2">3D Models</text>
<path d="M254.89999999999998,165.5 L257.4,168.10000000000002 L259.9,165.5" fill="none" stroke="#f0f0f0" stroke-width="1.2" stroke-linecap="round" stroke-linejoin="round"/>
<rect x="179.7" y="177.5" width="139.2" height="78.7" rx="5" fill="#272727" stroke="#5c5c5c" stroke-width="1" filter="url(#sh)"/>
<text x="190.55" y="195.31" font-size="10.50" font-weight="bold" fill="#f4f4f4" textLength="109.13" lengthAdjust="spacingAndGlyphs"  stroke="#f4f4f4" stroke-width="0.2">Insert 3D Model From</text>
<path d="M196.9,211.3 L202.5,214.5 V221 L196.9,224.2 L191.3,221 V214.5 Z" fill="none" stroke="#d8d8d8" stroke-width="1.1" />
<rect x="195.5" y="217.5" width="9.5" height="7.2" rx="0" fill="#272727" />
<rect x="196.3" y="218.2" width="8" height="5.2" rx="0" fill="none" stroke="#3a86d8" stroke-width="1.1" />
<line x1="198.5" y1="224.8" x2="202.2" y2="224.8" stroke="#3a86d8" stroke-width="1.1" />
<text x="211.78" y="222.64" font-size="10.00" fill="#e8e8e8" textLength="59.93" lengthAdjust="spacingAndGlyphs"  stroke="#e8e8e8" stroke-width="0.2">This Device...</text>
<line x1="232" y1="224.4" x2="238.5" y2="224.4" stroke="#e8e8e8" stroke-width="0.8" />
<path d="M196.9,237.3 L202.5,240.5 V247 L196.9,250.2 L191.3,247 V240.5 Z" fill="none" stroke="#d8d8d8" stroke-width="1.1" />
<circle cx="198.3" cy="245" r="4" fill="#272727"/>
<circle cx="198.3" cy="245" r="2.9" fill="none" stroke="#3a86d8" stroke-width="1.1"/>
<line x1="200.5" y1="247.2" x2="204" y2="250.7" stroke="#3a86d8" stroke-width="1.2" />
<text x="211.55" y="248.24" font-size="10.00" fill="#e8e8e8" textLength="88.85" lengthAdjust="spacingAndGlyphs"  stroke="#e8e8e8" stroke-width="0.2">Stock 3D Models...</text>
<line x1="211.8" y1="250" x2="217.5" y2="250" stroke="#e8e8e8" stroke-width="0.8" />
<rect x="177.3" y="152.3" width="94" height="25.6" rx="0" fill="none" stroke="#d42a2f" stroke-width="3" />
<path d="M716,0 Q718.5,1 718.5,4 L718.5,551 Q718.5,557.5 712,557.5 L6,557.5 Q0,557.5 0,551" fill="none" stroke="#6a6a6a" stroke-width="1" />
<rect x="0" y="558" width="720" height="3" rx="0" fill="#0b0b0b" />
</svg></body></html>
